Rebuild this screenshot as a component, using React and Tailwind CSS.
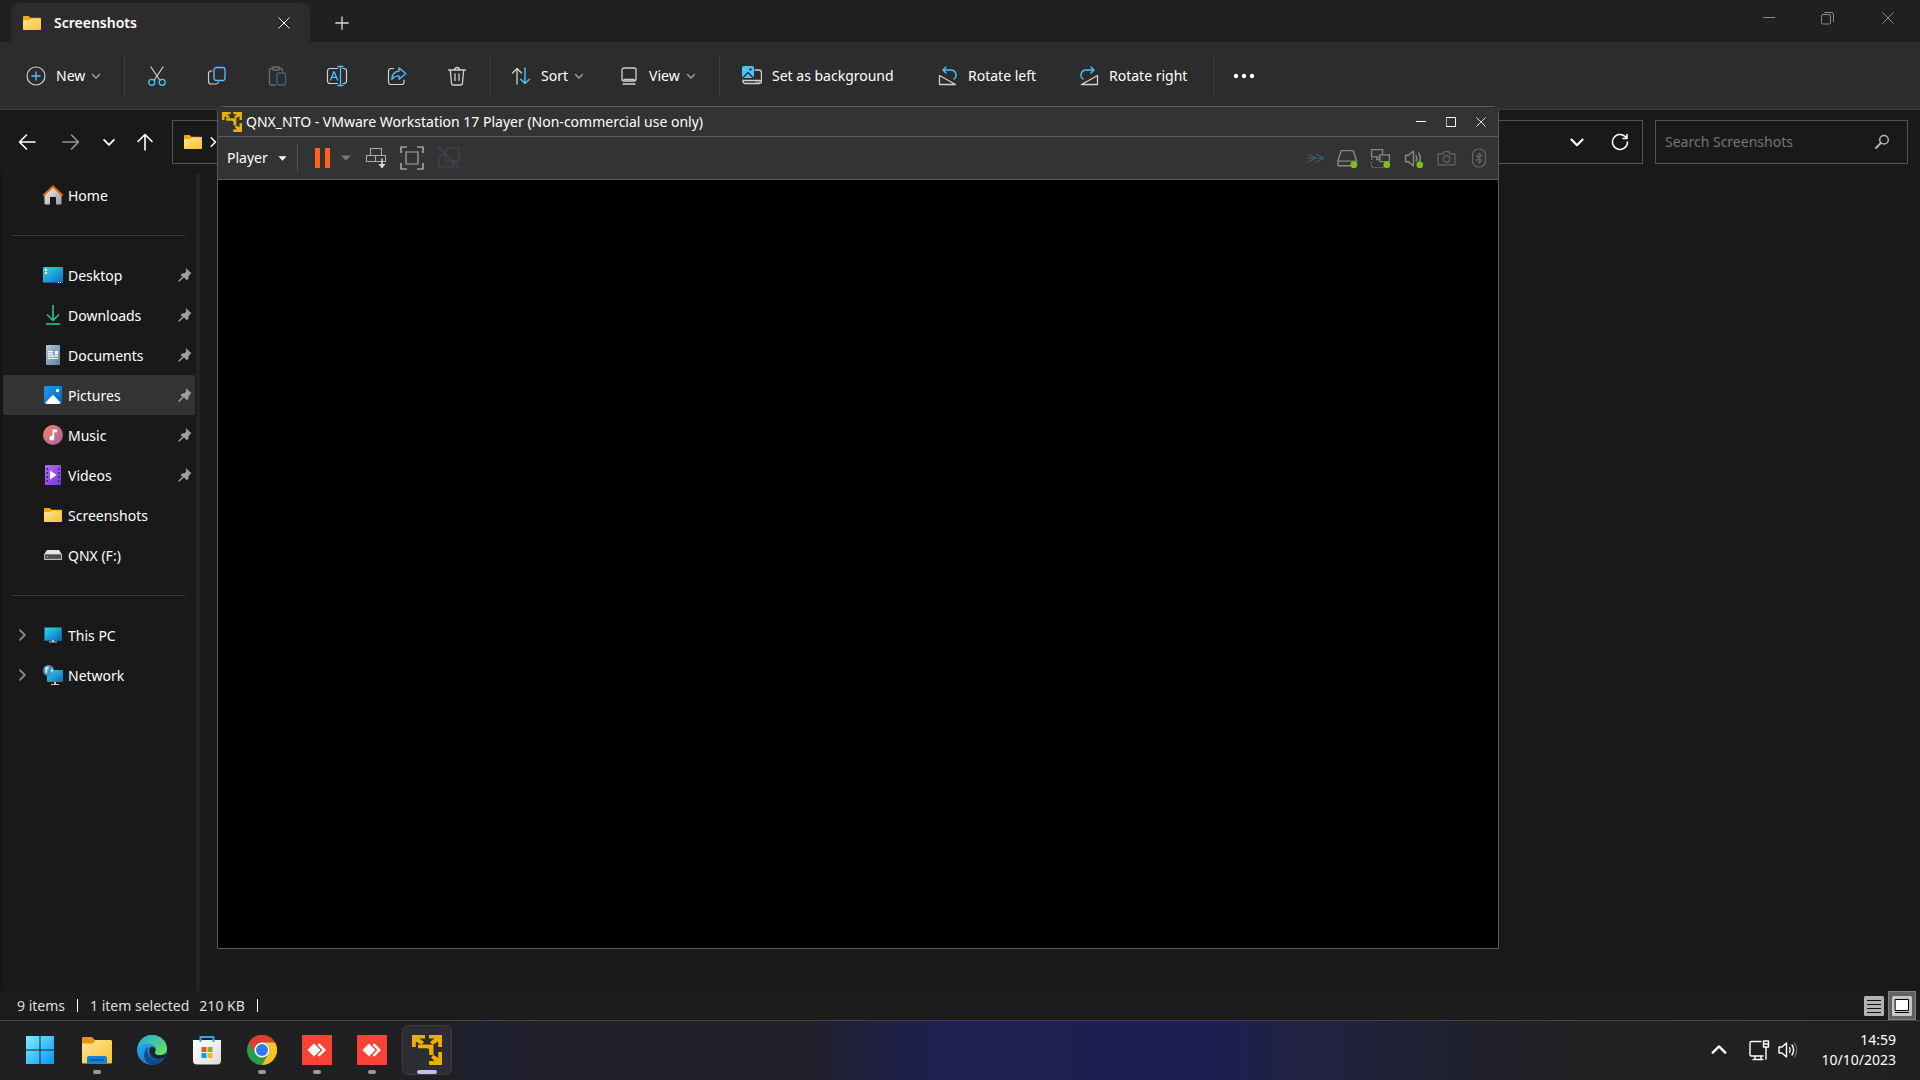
import React, { useState } from "react";

function Icon({ size = 20, box = 20, className = "", children }) {
  return (
    <svg
      width={size}
      height={size}
      viewBox={`0 0 ${box} ${box}`}
      fill="none"
      stroke="currentColor"
      strokeLinecap="round"
      strokeLinejoin="round"
      className={`shrink-0 ${className}`}
      aria-hidden="true"
    >
      {children}
    </svg>
  );
}

const BLUE = "#4cc2ff";

const FolderIcon = ({ size = 20 }) => (
  <Icon size={size}>
    <g stroke="none">
      <path d="M1 4.2c0-.7.4-1.2 1.1-1.2h4.5l1.9 1.8h9.4c.7 0 1.1.4 1.1 1.1V9H1z" fill="#f5a70c" />
      <path d="M1 7h6.4l1.7-1.6h8.8c.7 0 1.1.4 1.1 1v9.5c0 .6-.4 1.1-1.1 1.1H2.1c-.7 0-1.1-.5-1.1-1.1z" fill="url(#folderFill)" />
    </g>
  </Icon>
);

const Chevron = ({ size = 10, className }) => (
  <Icon size={size} box={10} className={className}>
    <path d="M1.5 3.5 5 7l3.5-3.5" strokeWidth="1.3" />
  </Icon>
);

const CloseIcon = ({ size = 12, className }) => (
  <Icon size={size} box={12} className={className}>
    <path d="M.8.8l10.4 10.4M11.2.8.8 11.2" />
  </Icon>
);

const VmwareIcon = ({ size = 30 }) => (
  <Icon size={size} box={30}>
    <g fill="#e9b000" stroke="none">
      <path d="M0 0h13v3.500H7.500L12 7l-2.500 2.800L3.800 6.500V12H0z" />
      <path d="M17 0h13v12h-3.800V6.500L20.500 9.800 18 7l4.500-3.500H17z" />
      <path d="M30 17v13H17v-4h5.500L19 22.500l2.500-2.800 4.700 3.300v-6z" />
      <path d="M6 9.500h15.500V20h-4.300v-4.500q0-2.300-2.300-2.300H6z" />
    </g>
  </Icon>
);

const Divider = () => <span className="h-10 w-px shrink-0 bg-[#3d3d3d]" />;

/* command bar */

function ToolButton({ label, disabled, children }) {
  return (
    <button
      aria-label={label}
      disabled={disabled}
      className="flex h-10 w-[60px] items-center justify-center text-[#d0d0d0] disabled:opacity-40"
    >
      {children}
    </button>
  );
}

function CommandBar() {
  return (
    <div className="flex h-[68px] shrink-0 items-center border-b border-[#3a3a3a] bg-[#2c2c2c] text-[#d0d0d0]">
      <button className="flex w-[124px] items-center gap-2.5 pl-[26px] text-white">
        <Icon className="text-[#d0d0d0]">
          <circle cx="10" cy="10" r="9" strokeWidth="1.2" />
          <path d="M10 6v8M6 10h8" stroke={BLUE} strokeWidth="1.3" />
        </Icon>
        New
        <Chevron className="-ml-1 text-[#a8a8a8]" />
      </button>
      <Divider />
      <div className="flex pl-[2px]">
        <ToolButton label="Cut">
          <Icon>
            <path d="M4 1l9 13.500M16 1 7 14.500" strokeWidth="1.2" />
            <g stroke={BLUE} strokeWidth="1.3">
              <circle cx="4.8" cy="16.3" r="3" />
              <circle cx="15.2" cy="16.3" r="3" />
            </g>
          </Icon>
        </ToolButton>
        <ToolButton label="Copy">
          <Icon>
            <path d="M5 5H4a2.500 2.500 0 0 0-2.500 2.500v8A2.500 2.500 0 0 0 4 18h5a2.500 2.500 0 0 0 2.500-2" strokeWidth="1.2" />
            <rect x="7" y="1.5" width="11" height="13" rx="2.5" stroke={BLUE} strokeWidth="1.3" />
          </Icon>
        </ToolButton>
        <ToolButton label="Paste" disabled>
          <Icon>
            <path d="M6 2.500H4A1.500 1.500 0 0 0 2.500 4v13.500A1.500 1.500 0 0 0 4 19h4M12 2.500h2A1.500 1.500 0 0 1 15.500 4v1M6 1h6v3H6z" strokeWidth="1.3" />
            <rect x="10" y="7" width="8.5" height="12" rx="1.5" stroke={BLUE} strokeWidth="1.3" />
          </Icon>
        </ToolButton>
        <ToolButton label="Rename">
          <Icon size={22} box={22}>
            <path d="M11.500 3.500H4A2.500 2.500 0 0 0 1.500 6v10A2.500 2.500 0 0 0 4 18.500h7.500M17 3.500h1A2.500 2.500 0 0 1 20.500 6v10a2.500 2.500 0 0 1-2.500 2.500h-1" strokeWidth="1.2" />
            <g stroke={BLUE} strokeWidth="1.3">
              <path d="M14.500 1.500v19M12 1.500h5M12 20.500h5" />
              <path d="M4.500 15 8 6.500l3.500 8.500M5.700 12.300h4.600" />
            </g>
          </Icon>
        </ToolButton>
        <ToolButton label="Share">
          <Icon>
            <path d="M6.500 2.500H4A2.500 2.500 0 0 0 1.500 5v11A2.500 2.500 0 0 0 4 18.500h10.500A2.500 2.500 0 0 0 17 16v-2" strokeWidth="1.2" />
            <path d="M12 1.800 18.800 7.500 12 13.200v-3.400c-3.500 0-5.500 1-7.200 3.700C5 9 7.500 5.500 12 5.200z" stroke={BLUE} strokeWidth="1.3" />
          </Icon>
        </ToolButton>
        <ToolButton label="Delete">
          <Icon>
            <path d="M1.500 4h17M7.500 4a2.500 2.500 0 0 1 5 0M3.300 4l1.200 13A2 2 0 0 0 6.500 19h7a2 2 0 0 0 2-2l1.200-13M8 8v6.500M12 8v6.500" strokeWidth="1.3" />
          </Icon>
        </ToolButton>
      </div>
      <span className="w-[3px]" />
      <Divider />
      <button className="flex w-[109px] items-center gap-2.5 pl-5 text-white">
        <Icon className="text-[#d0d0d0]">
          <path d="M6 18V2.500M1.500 7 6 2.500 10.500 7" strokeWidth="1.3" />
          <path d="M14 2v15.500M9.700 13.200 14 17.500l4.500-4.300" stroke={BLUE} strokeWidth="1.4" />
        </Icon>
        Sort
        <Chevron className="-ml-1 text-[#a8a8a8]" />
      </button>
      <button className="flex w-[119px] items-center gap-2.5 pl-[19px] text-white">
        <Icon className="text-[#d0d0d0]">
          <rect x="3" y="2" width="14" height="13" rx="2" strokeWidth="1.3" />
          <path d="M4 18h12M5 13.500h10" strokeWidth="1.3" />
        </Icon>
        View
        <Chevron className="-ml-1 text-[#a8a8a8]" />
      </button>
      <Divider />
      <button className="flex w-[196px] items-center gap-2.5 pl-[22px] text-white">
        <Icon className="text-[#d0d0d0]">
          <path d="M13 4h4a2.500 2.500 0 0 1 2.500 2.500V15a2.500 2.500 0 0 1-2.500 2.500H3.500A2.500 2.500 0 0 1 1 15v-1M1.500 14.500h17.500" strokeWidth="1.3" />
          <path d="M14 16h1M16.500 16h1" strokeWidth="1" />
          <rect width="12" height="12" rx="2" fill={BLUE} stroke="none" />
          <path d="M1.500 11 6 6.500l4.500 4.500" stroke="#2c2c2c" strokeWidth="1.5" />
          <circle cx="8.5" cy="3.5" r="1.2" fill="#2c2c2c" stroke="none" />
        </Icon>
        Set as background
      </button>
      <button className="flex w-[141px] items-center gap-2.5 pl-[22px] text-white">
        <Icon className="text-[#d0d0d0]">
          <path d="M1.500 9.500v9h16z" strokeWidth="1.3" />
          <path d="M8 1 5 4l3 3M5.500 4h7.500a5 5 0 0 1 3 9" stroke={BLUE} strokeWidth="1.4" />
        </Icon>
        Rotate left
      </button>
      <button className="flex w-[156px] items-center gap-2.5 pl-[22px] text-white">
        <Icon className="text-[#d0d0d0]">
          <path d="M18.500 9.500v9h-16z" strokeWidth="1.3" />
          <path d="M12 1l3 3-3 3M14.500 4H7a5 5 0 0 0-3 9" stroke={BLUE} strokeWidth="1.4" />
        </Icon>
        Rotate right
      </button>
      <Divider />
      <button aria-label="See more" className="flex w-[60px] justify-center text-white">
        <Icon size={22} box={22}>
          <g fill="currentColor" stroke="none">
            <circle cx="3" cy="11" r="2.2" />
            <circle cx="11" cy="11" r="2.2" />
            <circle cx="19" cy="11" r="2.2" />
          </g>
        </Icon>
      </button>
    </div>
  );
}

function AddressBar() {
  return (
    <div className="flex h-16 shrink-0 items-center gap-3 pr-3 text-white">
      <div className="flex w-40 shrink-0 items-center pl-[18px]">
        <button aria-label="Back" className="w-11">
          <Icon size={18} box={18}><path d="M17 9H1.500M8.500 2 1.500 9l7 7" strokeWidth="1.6" /></Icon>
        </button>
        <button aria-label="Forward" className="w-10 text-[#969696]">
          <Icon size={18} box={18}><path d="M1 9h15.500M9.500 2l7 7-7 7" strokeWidth="1.6" /></Icon>
        </button>
        <button aria-label="Recent locations" className="w-[34px]">
          <Chevron size={14} />
        </button>
        <button aria-label="Up">
          <Icon size={18} box={18}><path d="M9 17V1.500M2 8.500l7-7 7 7" strokeWidth="1.6" /></Icon>
        </button>
      </div>
      <div className="flex h-11 flex-1 items-center border border-[#535353] pl-2.5">
        <FolderIcon />
        <Chevron size={12} className="ml-1 -rotate-90" />
        <button aria-label="Previous locations" className="mr-[26px] ml-auto">
          <Chevron size={16} />
        </button>
        <button aria-label="Refresh" className="mr-[13px]">
          <Icon size={18} box={18}>
            <path d="M16.500 9a7.500 7.500 0 1 1-2.500-5.600l2 2M16 1.500v4h-4" strokeWidth="1.5" />
          </Icon>
        </button>
      </div>
      <label className="flex h-11 w-[253px] shrink-0 items-center border border-[#535353] px-[9px]">
        <input
          type="text"
          aria-label="Search Screenshots"
          placeholder="Search Screenshots"
          className="min-w-0 flex-1 bg-transparent outline-none placeholder:text-[#757575]"
        />
        <Icon size={16} box={16} className="mr-2 text-[#b4b4b4]">
          <circle cx="10" cy="5.8" r="4.3" strokeWidth="1.5" />
          <path d="M6.800 9 2 14" strokeWidth="1.9" />
        </Icon>
      </label>
    </div>
  );
}

/* sidebar */

const icons = {
  home: (
    <Icon>
      <g stroke="none">
        <path d="M1.500 9 10 1.500 18.500 9v9.500a1 1 0 0 1-1 1H13V12H7v7.500H2.500a1 1 0 0 1-1-1z" fill="url(#homeFill)" />
      </g>
      <path d="M1 10 10 1.500 19 10" stroke="#e8650f" strokeWidth="2.2" />
    </Icon>
  ),
  desktop: (
    <Icon>
      <g stroke="none">
        <rect y="2" width="20" height="16" rx="1" fill="url(#screenFill)" />
        <path d="M2 4h2v2H2zM2 7h2v2H2z" fill="#fff" />
        <path d="M0 17h20v1H0z" fill="#0a5ea8" />
        <path d="M15 17h1v1h-1zM17 17h1v1h-1z" fill="#fff" />
      </g>
    </Icon>
  ),
  downloads: (
    <Icon>
      <g stroke="#24bb8f" strokeWidth="1.7" strokeLinecap="butt">
        <path d="M10 0v15M4 9.500l6 6 6-6" />
        <path d="M3 19h14" />
      </g>
    </Icon>
  ),
  documents: (
    <Icon>
      <g stroke="none">
        <rect x="3" width="14" height="20" rx="1" fill="url(#docFill)" />
        <path d="M5 6h5v1.200H5zM5 8.300h5v1.200H5zM5 10.600h10v1.200H5zM5 12.900h10v1.200H5zM12 6h3v3.500h-3z" fill="#fff" />
      </g>
    </Icon>
  ),
  pictures: (
    <Icon>
      <g stroke="none">
        <rect x="1" y="1" width="18" height="18" rx="1.5" fill="url(#picFill)" />
        <path d="M2.500 17.500 9 10.700q1-.9 2 0l6.500 6.800q-.5 1.500-1.500 1.500H4q-1 0-1.500-1.500z" fill="#fff" />
        <circle cx="14.5" cy="5.5" r="1.7" fill="#fff" />
      </g>
    </Icon>
  ),
  music: (
    <Icon>
      <g stroke="none">
        <circle cx="10" cy="10" r="10" fill="url(#musicFill)" />
        <path d="M9.500 4.500h4.500v2.700h-2.700v5.900a2.400 2.400 0 1 1-1.800-2.300z" fill="#fff" />
      </g>
    </Icon>
  ),
  videos: (
    <Icon>
      <g stroke="none">
        <rect x="2" width="16" height="20" rx="1" fill="url(#videoFill)" />
        <path d="M7 5.500v9l6.500-4.500z" fill="#fff" />
        <path d="M3.500 3h1.500v2H3.500zM3.500 7h1.500v2H3.500zM3.500 11h1.500v2H3.500zM3.500 15h1.500v2H3.500zM15 3h1.500v2H15zM15 7h1.500v2H15zM15 11h1.500v2H15zM15 15h1.500v2H15z" fill="#4d1d91" />
      </g>
    </Icon>
  ),
  folder: <FolderIcon />,
  drive: (
    <Icon>
      <g stroke="none">
        <path d="M4 5h12l3 4.500H1z" fill="#e4e4e6" />
        <rect x="1" y="9" width="18" height="6" fill="#b9b9bb" />
        <rect x="2" y="9.5" width="16" height="4.3" fill="#4b4b4d" />
        <rect x="3.5" y="11" width="1.5" height="1.5" fill="#31d843" />
      </g>
    </Icon>
  ),
  pc: (
    <Icon>
      <g stroke="none">
        <rect x="1" y="2" width="18" height="14" rx="1" fill="#126b9e" />
        <rect x="2" y="3" width="16" height="12" fill="url(#screenFill)" />
        <path d="M9 15h2v1.500h3v1H6v-1h3z" fill="#c3cbd1" />
      </g>
    </Icon>
  ),
  network: (
    <Icon>
      <g stroke="none">
        <rect x="4" y="5" width="16" height="12" rx="1" fill="url(#screenFill)" />
        <path d="M11 17h2v2h3v1H8v-1h3z" fill="#c3cbd1" />
        <circle cx="5.5" cy="5.5" r="5.5" fill="#3d93bd" />
        <path d="M2 2.500q2-1.500 3.500-1l.5 2-2 1.500.5 2.500-2 1zM7.500 5l2.500-1.500q.5 3-1.500 5z" fill="#c9e6f2" />
      </g>
    </Icon>
  ),
};

const PinIcon = () => (
  <Icon size={14} box={14} className="text-[#98a1aa]">
    <path d="M8.500 1 13 5.300l-1.200.8-1.500 2.100-.3 2.800-1.200.8-2.300-2.300L3 7.300l.8-1.200 2.700-.5 1.700-1.700z" fill="currentColor" strokeWidth=".8" />
    <path d="M5 9.200 1 13" strokeWidth="1.5" />
  </Icon>
);

const quickAccess = [
  { name: "Desktop", icon: "desktop", pinned: true },
  { name: "Downloads", icon: "downloads", pinned: true },
  { name: "Documents", icon: "documents", pinned: true },
  { name: "Pictures", icon: "pictures", pinned: true },
  { name: "Music", icon: "music", pinned: true },
  { name: "Videos", icon: "videos", pinned: true },
  { name: "Screenshots", icon: "folder" },
  { name: "QNX (F:)", icon: "drive" },
];

function NavItem({ name, icon, pinned, expandable, selected, onSelect }) {
  return (
    <button
      onClick={() => onSelect(name)}
      className={`flex h-10 w-full items-center rounded-xs pr-[3px] pl-3 text-left text-white ${
        selected ? "bg-[#333333]" : ""
      }`}
    >
      <span className="w-7">
        {expandable && <Chevron size={14} className="-rotate-90 text-[#8a8a8a]" />}
      </span>
      {icons[icon]}
      <span className="ml-[5px] flex-1 pt-0.5">{name}</span>
      {pinned && <PinIcon />}
    </button>
  );
}

function Separator() {
  return (
    <div className="flex h-10 items-center px-2.5">
      <hr className="w-full border-[#3b3b3b]" />
    </div>
  );
}

function Sidebar() {
  const [selected, setSelected] = useState("Pictures");
  const item = (props) => (
    <NavItem key={props.name} {...props} selected={selected === props.name} onSelect={setSelected} />
  );

  return (
    <nav className="w-[200px] shrink-0 border-r-4 border-l-[3px] border-r-[#232323] border-l-[#141414] pt-px pr-px">
      {item({ name: "Home", icon: "home" })}
      <Separator />
      {quickAccess.map(item)}
      <Separator />
      {item({ name: "This PC", icon: "pc", expandable: true })}
      {item({ name: "Network", icon: "network", expandable: true })}
    </nav>
  );
}

function Explorer() {
  return (
    <div className="flex min-h-0 flex-1 flex-col bg-[#191919]">
      <div className="flex h-[42px] shrink-0 bg-[#202020]">
        <div className="mt-[3px] ml-[11px] flex w-[299px] items-center rounded-t-lg bg-[#2c2c2c] pr-5 pl-[11px] text-white">
          <FolderIcon />
          <span className="ml-3 flex-1 font-semibold">Screenshots</span>
          <button aria-label="Close tab"><CloseIcon /></button>
        </div>
        <button aria-label="New tab" className="mt-1 ml-[25px] text-[#d8d8d8]">
          <Icon size={14} box={14}><path d="M7 .8v12.400M.8 7h12.400" strokeWidth="1.3" /></Icon>
        </button>
        <div className="ml-auto flex h-9 items-center text-[#8a8a8a]">
          <button aria-label="Minimize" className="flex w-[58px] justify-center">
            <Icon size={12} box={12}><path d="M0 5.500h12" /></Icon>
          </button>
          <button aria-label="Restore" className="flex w-[58px] justify-center">
            <Icon size={13} box={13}>
              <rect x=".5" y="2.5" width="9" height="9.5" rx="1.5" />
              <path d="M3.500.5H10A2.500 2.500 0 0 1 12.500 3v6.500" />
            </Icon>
          </button>
          <button aria-label="Close" className="flex w-16 justify-center">
            <CloseIcon />
          </button>
        </div>
      </div>
      <CommandBar />
      <AddressBar />
      <div className="flex min-h-0 flex-1">
        <Sidebar />
        <main className="flex-1" />
      </div>
      <footer className="flex h-[29px] shrink-0 items-center bg-[#1c1c1c] pr-1 pl-[17px] text-[#dedede]">
        <span>9 items</span>
        <span className="mx-3 h-[13px] w-px bg-white" />
        <span>1 item selected</span>
        <span className="ml-2.5">210 KB</span>
        <span className="mx-3 h-[13px] w-px bg-white" />
        <button aria-label="Details" className="ml-auto">
          <Icon>
            <rect width="20" height="20" rx="1.5" fill="#b1b1b1" stroke="none" />
            <path d="M3 4.500h14M3 8.500h14M3 12.500h14M3 16.500h14" stroke="#111" strokeLinecap="butt" />
          </Icon>
        </button>
        <button
          aria-label="Large icons"
          className="ml-1 flex h-[29px] w-7 items-center justify-center border border-[#838383] bg-[#626262]"
        >
          <Icon>
            <rect width="20" height="20" rx="1.5" fill="#c6c6c6" stroke="none" />
            <rect x="3.5" y="3.5" width="13" height="11" fill="#fff" stroke="#000" />
            <path d="M3 16.500h14" stroke="#000" strokeLinecap="butt" />
          </Icon>
        </button>
      </footer>
    </div>
  );
}

/* virtual machine window */

const GreenDot = () => <circle cx="16" cy="16" r="3.2" fill="#7ac313" stroke="none" />;

function PlayerWindow() {
  return (
    <section className="absolute top-[106px] right-[421px] bottom-[131px] left-[217px] flex flex-col rounded-t-md border border-[#5a5a5a] bg-black text-white">
      <header className="flex h-[30px] shrink-0 items-center rounded-t-md border-b border-[#5a5a5a] bg-[#333333] pr-3 pl-1">
        <VmwareIcon size={20} />
        <h1 className="ml-1 flex-1">QNX_NTO - VMware Workstation 17 Player (Non-commercial use only)</h1>
        <div className="flex gap-5">
          <button aria-label="Minimize">
            <Icon size={10} box={10}><path d="M0 4.500h10" strokeLinecap="butt" /></Icon>
          </button>
          <button aria-label="Maximize">
            <Icon size={10} box={10}><rect x=".5" y=".5" width="9" height="9" /></Icon>
          </button>
          <button aria-label="Close"><CloseIcon size={10} /></button>
        </div>
      </header>
      <div className="flex h-[43px] shrink-0 items-center border-b border-[#5a5a5a] bg-[#333333] px-[9px]">
        <button className="flex items-center gap-2.5">
          Player
          <Icon size={9} box={10}><path d="M.5 2.500h9L5 7.500z" fill="currentColor" stroke="none" /></Icon>
        </button>
        <span className="ml-2.5 h-7 w-px bg-[#555555]" />
        <button aria-label="Suspend" className="ml-[15px]">
          <Icon>
            <path d="M2 0h5v20H2zM12 0h5v20h-5z" fill="#ff6319" stroke="none" />
          </Icon>
        </button>
        <button aria-label="Power options" className="ml-2 text-[#7a7a7a]">
          <Icon size={10} box={10}><path d="M0 2.500h10L5 7.500z" fill="currentColor" stroke="none" /></Icon>
        </button>
        <button aria-label="Send Ctrl+Alt+Del" className="ml-3.5 text-[#a9a9a9]">
          <Icon size={22} box={22}>
            <g strokeLinejoin="miter" strokeWidth="1.1">
              <path d="M5.500 1.500h11v7h-11zM1.500 8.500h9v6h-9zM10.500 8.500h10v6h-10z" />
              <path d="M17 12v8" stroke="#d8d8d8" strokeWidth="1.6" />
              <path d="M13.500 17h7L17 21.500z" fill="#d8d8d8" stroke="none" />
            </g>
          </Icon>
        </button>
        <button aria-label="Full screen" className="ml-[13px] text-[#d0d0d0]">
          <Icon size={24} box={24}>
            <g strokeLinejoin="miter" strokeLinecap="butt" strokeWidth="1.2">
              <path d="M1 7V1h6M17 1h6v6M23 17v6h-6M7 23H1v-6" />
              <path d="M6 6h12v12H6z" stroke="#a9a9a9" />
            </g>
          </Icon>
        </button>
        <button aria-label="Unity" className="ml-[13px] text-[#3d4a57]">
          <Icon size={24} box={24}>
            <g strokeLinejoin="miter" strokeLinecap="butt">
              <path d="M9 2h13v13H9z" />
              <path d="M16 15v6H2V9h7" />
              <path d="M1 1l22 22" strokeWidth="1.3" />
            </g>
          </Icon>
        </button>
        <div className="ml-auto flex items-center gap-3 text-[#858585]">
          <button aria-label="Removable devices" className="text-[#3f5c72]">
            <Icon>
              <path d="M3 6 11 10 3 14M11 6l8 4-8 4M3 10h16" strokeWidth="1.1" />
            </Icon>
          </button>
          <button aria-label="Hard disk">
            <Icon size={21} box={20}>
              <path d="M4 2.500h11.500l3 9.500v5H1V12zM1 12.500h17" strokeWidth="1.4" />
              <GreenDot />
            </Icon>
          </button>
          <button aria-label="Network adapter">
            <Icon size={21} box={20}>
              <g strokeLinejoin="miter" strokeLinecap="butt">
                <path d="M1.500 10v8.500h12V15" strokeDasharray="1.500 1.500" />
                <path d="M1.500 1.500h10.500v7H1.500z" strokeWidth="1.3" />
                <path d="M9.500 6.500h9v6.500h-9z" fill="#333333" strokeWidth="1.3" />
                <path d="M6.500 8.500v2.500h3" strokeWidth="1.3" />
              </g>
              <GreenDot />
            </Icon>
          </button>
          <button aria-label="Sound card">
            <Icon size={21} box={20}>
              <path d="M2.500 7v6H5l5 4v-14L5 7zM12.500 7.500q1.500 2.500 0 5M15 5q3 5 0 9" strokeWidth="1.4" />
              <GreenDot />
            </Icon>
          </button>
          <button aria-label="Camera" className="text-[#666666]">
            <Icon size={21} box={20}>
              <path d="M2 5.500h4.500L8 3.500h4l1.500 2H18V16H2z" strokeWidth="1.2" />
              <circle cx="10" cy="10.5" r="3.2" strokeWidth="1.2" />
            </Icon>
          </button>
          <button aria-label="Bluetooth" className="text-[#666666]">
            <Icon size={20} box={20}>
              <rect x="3.5" y="1" width="13" height="18" rx="6" strokeWidth="1.2" />
              <path d="m7.500 7.500 5 5L10 15V5l2.500 2.500-5 5" strokeWidth="1.1" />
            </Icon>
          </button>
        </div>
      </div>
    </section>
  );
}

/* taskbar */

const AnyDeskIcon = () => (
  <Icon size={30} box={30}>
    <g stroke="none">
      <path d="M0 0h30v30H0z" fill="#fb4237" />
      <path d="M5.500 15 12 8.500l6.500 6.500-6.500 6.500z" fill="#fff" />
      <path d="m15.500 10 1.800-1.700L24 15l-6.700 6.700-1.800-1.700 5-5z" fill="#fff" />
    </g>
  </Icon>
);

const apps = [
  {
    name: "File Explorer",
    running: true,
    icon: (
      <Icon size={30} box={30}>
        <g stroke="none">
          <path d="M0 3.500C0 2.500.7 2 1.500 2H10l3 3h5v5H0z" fill="#e39a05" />
          <path d="M0 8.500h10.500L13.500 5h15c1 0 1.500.6 1.500 1.500V27c0 1-.5 1.500-1.500 1.500h-27C.5 28.500 0 28 0 27z" fill="url(#folderFill)" />
          <path d="M5 28.500V23a2 2 0 0 1 2-2h16a2 2 0 0 1 2 2v5.500z" fill="#1083d6" />
          <path d="M8 24.200h14v1.500H8z" fill="#0b4f9c" />
        </g>
      </Icon>
    ),
  },
  {
    name: "Microsoft Edge",
    icon: (
      <Icon size={30} box={30}>
        <g stroke="none">
          <circle cx="15" cy="15" r="15" fill="url(#edgeBlue)" />
          <path d="M1 11.500C3 4 8.500 0 15 0c9 0 15 6.500 15 13.500 0 4-3 6.500-7 6.500-3.500 0-5-1.200-5-2.200 0-.8 1-1.300 1-3.300 0-3-3.500-6-8-6C6.500 8.500 3 10 1 11.500z" fill="url(#edgeGreen)" />
          <path d="M11 12c-2 5 1 13 9 13 3.500 0 6-.8 7.500-2C25 27.500 20.500 30 15.500 30 9 29 6 23 7.500 17.500 8 15 9.500 13 11 12z" fill="#114a8b" />
          <path d="M12.500 13.500c1.800-2.500 6-1.500 6 1.200 0 1.800-1 2-.8 3.200.4 1.500 3 2.500 5.800 2.300 3 0 4.500-1.300 5.800-2.200-.3 2-1 3.500-1.800 4.800-2.500 1.500-6 2-9 .7-4.500-1.800-7-6.500-6-10z" fill="#202124" />
          <path d="M12.500 13.500c-1 4 1.500 8 6 9.500 3 1 6 .8 9-.5-2 2.500-12 4-15-2-1-2.500-1-5 0-7z" fill="#114a8b" />
        </g>
      </Icon>
    ),
  },
  {
    name: "Microsoft Store",
    icon: (
      <Icon size={30} box={30}>
        <g stroke="none">
          <path d="M1 5h28v20.500a4 4 0 0 1-4 4H5a4 4 0 0 1-4-4z" fill="url(#bagFill)" />
          <path d="M9.500 12H14.500v5H9.500z" fill="#f25022" />
          <path d="M15.500 12H20.500v5H15.500z" fill="#7fba00" />
          <path d="M9.500 18H14.500v5H9.500z" fill="#00a4ef" />
          <path d="M15.500 18H20.500v5H15.500z" fill="#ffb900" />
        </g>
        <path d="M8.500 7V2h13v5" stroke="#1cb0f0" strokeWidth="2" strokeLinecap="butt" />
      </Icon>
    ),
  },
  {
    name: "Google Chrome",
    running: true,
    icon: (
      <Icon size={30} box={30}>
        <g stroke="none">
          <circle cx="15" cy="15" r="15" fill="#2b9d48" />
          <path d="M2 7.500A15 15 0 0 1 28 7.500H15a7.500 7.500 0 0 0-6.500 11.200z" fill="#e33b2e" />
          <path d="M28 7.500A15 15 0 0 1 15 30l6.500-11.200A7.500 7.500 0 0 0 15 7.500z" fill="#fcc31e" />
          <circle cx="15" cy="15" r="7.5" fill="#fff" />
          <circle cx="15" cy="15" r="6" fill="#2f7cf0" />
        </g>
      </Icon>
    ),
  },
  { name: "AnyDesk", running: true, icon: <AnyDeskIcon /> },
  { name: "AnyDesk session", running: true, icon: <AnyDeskIcon /> },
  { name: "VMware Player", active: true, icon: <VmwareIcon /> },
];

function Taskbar() {
  return (
    <div className="flex h-[60px] shrink-0 items-center justify-between border-t border-[#444348] bg-[linear-gradient(to_right,#202022_0%,#202022_23%,#1f2030_25%,#22202a_31%,#22202c_42%,#1f2045_46%,#1f204f_50%,#1e1f50_63%,#202240_69%,#212128_79%,#222222_84%,#202022_100%)] pr-6 pb-0.5 pl-[15px] text-white">
      <div className="flex gap-[5px]">
        <button aria-label="Start" className="mr-0.5 flex h-[50px] w-[50px] items-center justify-center">
          <Icon size={30} box={30}>
            <path d="M1 1h13.500v13.500H1zM15.500 1H29v13.500H15.500zM1 15.500h13.500V29H1zM15.500 15.500H29V29H15.500z" fill="url(#winFill)" stroke="none" />
          </Icon>
        </button>
        {apps.map(({ name, icon, running, active }) => (
          <button
            key={name}
            aria-label={name}
            className={`relative flex h-[50px] w-[50px] items-center justify-center rounded-md border ${
              active ? "border-[#3b3b43] bg-[#2c2c35]" : "border-transparent"
            }`}
          >
            {icon}
            {running && <span className="absolute bottom-0 h-1 w-2 rounded-full bg-[#9a9a9a]" />}
            {active && <span className="absolute bottom-0 h-1 w-5 rounded-full bg-[#c5bfe3]" />}
          </button>
        ))}
      </div>
      <div className="flex items-center">
        <button aria-label="Show hidden icons">
          <Chevron size={18} className="rotate-180" />
        </button>
        <button aria-label="Network and sound" className="ml-5 flex items-center gap-2">
          <Icon size={22} box={22}>
            <path d="M13 2.500H3.500A1.500 1.500 0 0 0 2 4v11.500A1.500 1.500 0 0 0 3.500 17H15M7 17v3M13 17v3M5 20.500h10M15.500 2h5v6h-5zM18 8v12M16 5h4" strokeWidth="1.4" />
          </Icon>
          <Icon size={20} box={20}>
            <path d="M1 7v6h3l4.500 4V3L4 7zM11.500 7.500q1.500 2.500 0 5M14 5q3.200 5 0 10" strokeWidth="1.4" />
            <path d="M16.500 3q4.500 7 0 14" stroke="#6b6b6b" strokeWidth="1.3" />
          </Icon>
        </button>
        <button className="ml-6 text-right leading-5">
          14:59
          <br />
          10/10/2023
        </button>
      </div>
    </div>
  );
}

function Gradients() {
  const fills = [
    ["folderFill", "#ffe59a", "#fcc02f"],
    ["homeFill", "#f2f2f2", "#9d9d9d"],
    ["screenFill", "#35d5e6", "#0a6cc4"],
    ["docFill", "#b4c6da", "#5f7f9f"],
    ["picFill", "#1f9be6", "#0a62b8"],
    ["musicFill", "#f58a55", "#a75bb0"],
    ["videoFill", "#b66cf0", "#7836d8"],
    ["winFill", "#7df0fb", "#0795fb"],
    ["edgeBlue", "#30b6ef", "#0b63c4"],
    ["edgeGreen", "#1fa9e6", "#6fe84c"],
    ["bagFill", "#ffffff", "#dcdcdc"],
  ];
  return (
    <svg width="0" height="0" className="absolute" aria-hidden="true">
      <defs>
        {fills.map(([id, from, to]) => (
          <linearGradient key={id} id={id} x1="0" y1="0" x2="1" y2="1">
            <stop offset="0" stopColor={from} />
            <stop offset="1" stopColor={to} />
          </linearGradient>
        ))}
      </defs>
    </svg>
  );
}

function App() {
  return (
    <div className="relative flex h-screen flex-col overflow-hidden bg-[#191919] font-['Noto_Sans',sans-serif] text-sm whitespace-nowrap">
      <Gradients />
      <Explorer />
      <PlayerWindow />
      <Taskbar />
    </div>
  );
}

export default App;
